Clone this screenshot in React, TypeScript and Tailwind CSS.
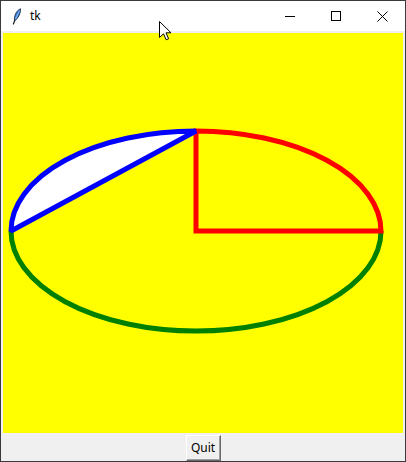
import React from "react";

export default function App() {
  const font = { fontFamily: '"Noto Sans", "Segoe UI", Arial, sans-serif' };
  return (
    <div className="relative w-[406px] h-[462px] bg-[#f0f0f0] border border-[#3a3a3a] flex flex-col" style={font}>
      {/* title bar */}
      <div className="h-[30px] bg-white flex items-center shrink-0">
        <svg width="10" height="17" viewBox="0 0 10 17" className="ml-[11px] mt-[1px]">
          <path d="M8.6 0.8 C5.2 2.2 2.6 6 2.3 11.6 L3.6 12.2 C6.4 9.4 8.6 5.6 8.6 0.8 Z" fill="#3b7fd9" stroke="#1c2a44" strokeWidth="0.9" />
          <path d="M7.6 2.6 L3.2 11.8" stroke="#9cc4f2" strokeWidth="0.8" />
          <path d="M3 11.8 L1.4 16" stroke="#1a1a1a" strokeWidth="1.2" strokeLinecap="round" />
        </svg>
        <span className="ml-[8px] text-[12px] text-black leading-none">tk</span>
        <div className="flex-1" />
        <div className="w-[46px] h-[30px] flex items-center justify-center">
          <div className="w-[10px] h-px bg-black" />
        </div>
        <div className="w-[46px] h-[30px] flex items-center justify-center">
          <div className="w-[10px] h-[10px] border border-black" />
        </div>
        <div className="w-[46px] h-[30px] flex items-center justify-center">
          <svg width="11" height="11" viewBox="0 0 11 11">
            <path d="M0.5 0.5 L10.5 10.5 M10.5 0.5 L0.5 10.5" stroke="black" strokeWidth="1" />
          </svg>
        </div>
      </div>
      {/* canvas with highlight border */}
      <div className="p-[2px] bg-[#f0f0f0] shrink-0">
        <div className="w-[400px] h-[400px] bg-[#ffff00]">
          <svg width="400" height="400" viewBox="2 2 400 400">
            <path d="M10 200 A185 100 0 0 0 380 200" fill="none" stroke="#008000" strokeWidth="5" />
            <path d="M195 200 L380 200 A185 100 0 0 0 195 100 Z" fill="none" stroke="#ff0000" strokeWidth="5" strokeLinejoin="miter" strokeMiterlimit="1.5" />
            <path d="M195 100 A185 100 0 0 0 10 200 Z" fill="#ffffff" stroke="#0000ff" strokeWidth="5" strokeLinejoin="miter" strokeMiterlimit="1.5" />
          </svg>
        </div>
      </div>
      {/* bottom row */}
      <div className="flex-1 flex justify-center items-start">
        <button className="w-[35px] h-[26px] bg-[#f0f0f0] border-t border-l border-t-white border-l-white border-r border-b border-r-[#696969] border-b-[#696969] shadow-[inset_-1px_-1px_0_#a0a0a0] text-[12px] text-black leading-none flex items-center justify-center pb-[1px]">
          Quit
        </button>
      </div>
      {/* mouse cursor */}
      <svg width="13" height="20" viewBox="0 0 13 20" className="absolute left-[158px] top-[20px]">
        <path d="M0.5 0.5 L0.5 16.5 L4.5 12.8 L7.2 18.8 L9.6 17.8 L7 11.8 L12 11.8 Z" fill="white" stroke="black" strokeWidth="1" strokeLinejoin="miter" />
      </svg>
    </div>
  );
}
